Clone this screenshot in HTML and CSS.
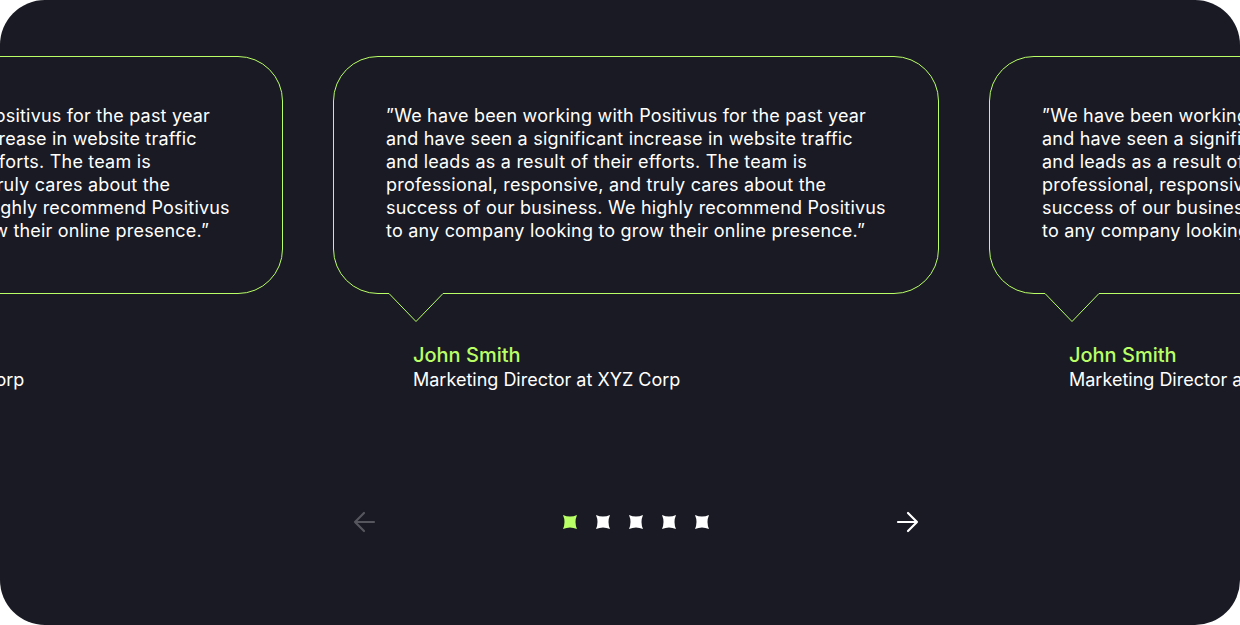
FILE: index.html
```html
<!DOCTYPE html>
<html lang="en">
<head>
<meta charset="utf-8">
<title>Testimonials</title>
<link rel="stylesheet" href="styles.css">
</head>
<body>
<section class="testimonials">
  <div class="track">
    <div class="slide">
      <div class="bubble">
        <p class="quote">”We have been working with Positivus for the past year<br>and have seen a significant increase in website traffic<br>and leads as a result of their efforts. The team is<br>professional, responsive, and truly cares about the<br>success of our business. We highly recommend Positivus<br>to any company looking to grow their online presence.”</p>
        <svg class="tail" viewBox="0 0 56 30" width="56" height="30"><rect x="1" y="0" width="54" height="2" fill="#191A23"/><polyline points="1,0.5 28,28.5 55,0.5" fill="none" stroke="#B9FF66" stroke-width="1"/></svg>
      </div>
      <div class="author">
        <div class="name">John Smith</div>
        <div class="role">Marketing Director at XYZ Corp</div>
      </div>
    </div>
    <div class="slide">
      <div class="bubble">
        <p class="quote">”We have been working with Positivus for the past year<br>and have seen a significant increase in website traffic<br>and leads as a result of their efforts. The team is<br>professional, responsive, and truly cares about the<br>success of our business. We highly recommend Positivus<br>to any company looking to grow their online presence.”</p>
        <svg class="tail" viewBox="0 0 56 30" width="56" height="30"><rect x="1" y="0" width="54" height="2" fill="#191A23"/><polyline points="1,0.5 28,28.5 55,0.5" fill="none" stroke="#B9FF66" stroke-width="1"/></svg>
      </div>
      <div class="author">
        <div class="name">John Smith</div>
        <div class="role">Marketing Director at XYZ Corp</div>
      </div>
    </div>
    <div class="slide">
      <div class="bubble">
        <p class="quote">”We have been working with Positivus for the past year<br>and have seen a significant increase in website traffic<br>and leads as a result of their efforts. The team is<br>professional, responsive, and truly cares about the<br>success of our business. We highly recommend Positivus<br>to any company looking to grow their online presence.”</p>
        <svg class="tail" viewBox="0 0 56 30" width="56" height="30"><rect x="1" y="0" width="54" height="2" fill="#191A23"/><polyline points="1,0.5 28,28.5 55,0.5" fill="none" stroke="#B9FF66" stroke-width="1"/></svg>
      </div>
      <div class="author">
        <div class="name">John Smith</div>
        <div class="role">Marketing Director at XYZ Corp</div>
      </div>
    </div>
  </div>
  <div class="nav">
    <button class="arrow prev" aria-label="Previous">
      <svg viewBox="0 0 24 24" width="24" height="24"><path d="M22 12H3M12 3l-9 9 9 9" fill="none" stroke="currentColor" stroke-width="2.2" stroke-linecap="round" stroke-linejoin="round"/></svg>
    </button>
    <div class="dots">
      <svg class="dot active" viewBox="0 0 14 14" width="14" height="14"><path d="M0 0Q7 3 14 0Q11 7 14 14Q7 11 0 14Q3 7 0 0Z"/></svg>
      <svg class="dot" viewBox="0 0 14 14" width="14" height="14"><path d="M0 0Q7 3 14 0Q11 7 14 14Q7 11 0 14Q3 7 0 0Z"/></svg>
      <svg class="dot" viewBox="0 0 14 14" width="14" height="14"><path d="M0 0Q7 3 14 0Q11 7 14 14Q7 11 0 14Q3 7 0 0Z"/></svg>
      <svg class="dot" viewBox="0 0 14 14" width="14" height="14"><path d="M0 0Q7 3 14 0Q11 7 14 14Q7 11 0 14Q3 7 0 0Z"/></svg>
      <svg class="dot" viewBox="0 0 14 14" width="14" height="14"><path d="M0 0Q7 3 14 0Q11 7 14 14Q7 11 0 14Q3 7 0 0Z"/></svg>
    </div>
    <button class="arrow next" aria-label="Next">
      <svg viewBox="0 0 24 24" width="24" height="24"><path d="M2 12H21M12 3l9 9-9 9" fill="none" stroke="currentColor" stroke-width="2.2" stroke-linecap="round" stroke-linejoin="round"/></svg>
    </button>
  </div>
</section>
</body>
</html>
```
FILE: styles.css
```css
* { box-sizing: border-box; }
html, body { margin: 0; padding: 0; background: #ffffff; }
body { font-family: "Inter", "DejaVu Sans", sans-serif; }

.testimonials {
  width: 1240px;
  height: 625px;
  background: #191A23;
  border-radius: 45px;
  overflow: hidden;
  padding: 56px 0 0 32px;
  display: flex;
  flex-direction: column;
  align-items: center;
}

.track {
  display: flex;
  gap: 50px;
  flex-shrink: 0;
}

.slide {
  width: 606px;
  flex-shrink: 0;
}

.bubble {
  position: relative;
  border: 1px solid #B9FF66;
  border-radius: 45px;
  padding: 47px 20px 51px 52px;
}

.quote {
  margin: 0;
  color: #ffffff;
  font-size: 18px;
  line-height: 23px;
  letter-spacing: 0.2px;
  font-weight: 400;
  white-space: nowrap;
}

.tail {
  position: absolute;
  left: 54px;
  top: 100%;
  display: block;
}

.author {
  margin-top: 49px;
  padding-left: 80px;
}

.name {
  color: #B9FF66;
  font-size: 20px;
  line-height: 25px;
  font-weight: 500;
}

.role {
  color: #ffffff;
  font-size: 18px;
  line-height: 23px;
}

.nav {
  margin-top: 119px;
  width: 568px;
  display: flex;
  align-items: center;
  justify-content: space-between;
}

.arrow {
  background: none;
  border: 0;
  padding: 0;
  width: 24px;
  height: 24px;
  display: flex;
  cursor: pointer;
}

.prev { color: #56565E; }
.next { color: #ffffff; }

.dots {
  display: flex;
  gap: 19px;
  align-items: center;
}

.dot { display: block; fill: #ffffff; }
.dot.active { fill: #B9FF66; }
```
